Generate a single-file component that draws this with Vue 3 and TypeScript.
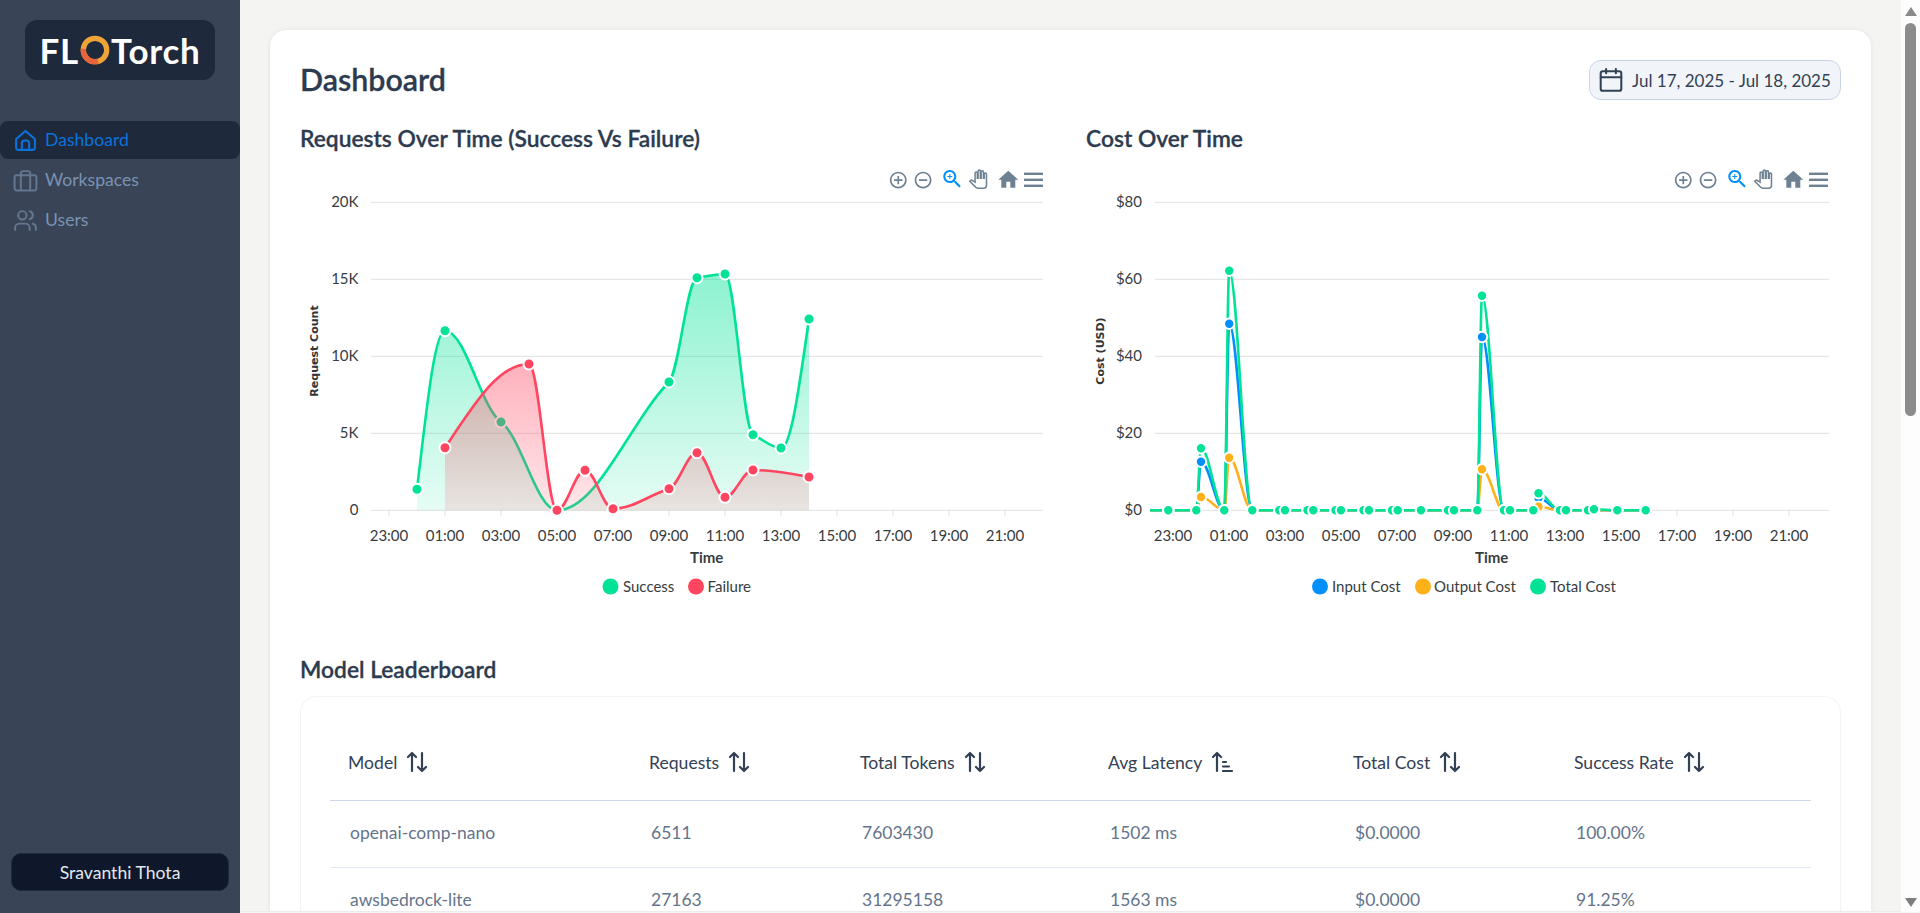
<script setup lang="ts">
interface Pt { x: number; y: number }

function smoothPath(pts: Pt[]): string {
  const n = pts.length
  const t: number[] = new Array(n).fill(0)
  const sl: number[] = []
  for (let i = 0; i < n - 1; i++) sl.push((pts[i + 1].y - pts[i].y) / (pts[i + 1].x - pts[i].x))
  for (let i = 1; i < n - 1; i++) {
    const a = sl[i - 1]
    const b = sl[i]
    const h0 = pts[i].x - pts[i - 1].x
    const h1 = pts[i + 1].x - pts[i].x
    const p = (a * h1 + b * h0) / (h0 + h1)
    t[i] = 0.45 * ((Math.sign(a) + Math.sign(b)) * Math.min(Math.abs(a), Math.abs(b), 0.5 * Math.abs(p)) || 0)
  }
  t[0] = n > 1 ? (3 * sl[0] - t[1]) / 2 : 0
  t[n - 1] = n > 1 ? (3 * sl[n - 2] - t[n - 2]) / 2 : 0
  let d = `M${pts[0].x} ${pts[0].y}`
  for (let i = 0; i < n - 1; i++) {
    const h = (pts[i + 1].x - pts[i].x) * 0.36
    d += `C${pts[i].x + h} ${pts[i].y + h * t[i]} ${pts[i + 1].x - h} ${pts[i + 1].y - h * t[i + 1]} ${pts[i + 1].x} ${pts[i + 1].y}`
  }
  return d
}

const BASE = 510.3
const gridY = [202.3, 279.3, 356.3, 433.3, BASE]
const hourL = (h: number) => 417 + 28 * h
const tickLabels = ['23:00', '01:00', '03:00', '05:00', '07:00', '09:00', '11:00', '13:00', '15:00', '17:00', '19:00', '21:00']
const ticksLeft = tickLabels.map((label, i) => ({ label, x: 389 + 56 * i }))
const ticksRight = tickLabels.map((label, i) => ({ label, x: 1173 + 56 * i }))
const yLeft = ['20K', '15K', '10K', '5K', '0'].map((label, i) => ({ label, y: gridY[i] }))
const yRight = ['$80', '$60', '$40', '$20', '$0'].map((label, i) => ({ label, y: gridY[i] }))

const success: Pt[] = [
  [0, 489.3], [1, 330.7], [3, 422], [5, BASE], [9, 382], [10, 277.7], [11, 274], [12, 434.7], [13, 448], [14, 319],
].map(([h, y]) => ({ x: hourL(h), y }))
const failure: Pt[] = [
  [1, 447.7], [4, 364], [5, BASE], [6, 470.3], [7, 508.7], [9, 488.7], [10, 452.7], [11, 497.3], [12, 470], [14, 477],
].map(([h, y]) => ({ x: hourL(h), y }))

const area = (pts: Pt[]) => `${smoothPath(pts)}L${pts[pts.length - 1].x} ${BASE}L${pts[0].x} ${BASE}Z`
const successLine = smoothPath(success)
const failureLine = smoothPath(failure)
const successArea = area(success)
const failureArea = area(failure)

const costX = [1150, 1168.3, 1196.3, 1201, 1224.3, 1229.2, 1252.3, 1279.3, 1285, 1307.5, 1313.3, 1335.5, 1341, 1363.5, 1369, 1392, 1397.7, 1421, 1448, 1454, 1477.3, 1482, 1504, 1510, 1533.3, 1538.5, 1560, 1566, 1588, 1594, 1617.3, 1645.7]
function costSeries(peaks: Record<number, number>): Pt[] {
  return costX.map((x) => ({ x, y: peaks[x] ?? BASE }))
}
const inputCost = costSeries({ 1201: 461.7, 1229.2: 323.7, 1482: 337, 1538.5: 498 })
const outputCost = costSeries({ 1201: 497, 1229.2: 457.7, 1482: 469.3, 1538.5: 506.7 })
const totalCost = costSeries({ 1201: 448.3, 1229.2: 270.7, 1482: 295.7, 1538.5: 493.3, 1594: 509.3 })
const costLines = [
  { name: 'input', color: '#008FFB', d: smoothPath(inputCost), pts: inputCost.slice(1) },
  { name: 'output', color: '#FEB019', d: smoothPath(outputCost), pts: outputCost.slice(1) },
  { name: 'total', color: '#00E396', d: smoothPath(totalCost), pts: totalCost.slice(1) },
]

const columns = [
  { label: 'Model', sorted: false },
  { label: 'Requests', sorted: false },
  { label: 'Total Tokens', sorted: false },
  { label: 'Avg Latency', sorted: true },
  { label: 'Total Cost', sorted: false },
  { label: 'Success Rate', sorted: false },
]
const rows = [
  ['openai-comp-nano', '6511', '7603430', '1502 ms', '$0.0000', '100.00%'],
  ['awsbedrock-lite', '27163', '31295158', '1563 ms', '$0.0000', '91.25%'],
]
const toolbarOffsets = { left: -785, right: 0 }
</script>

<template>
  <div class="app">
    <aside class="sidebar">
      <div class="logo">
        <span>FL</span>
        <svg class="logo-ring" viewBox="0 0 32 32" width="30" height="30">
          <circle cx="16" cy="16" r="12.5" fill="none" stroke="#F0A438" stroke-width="5.6" />
          <circle cx="16" cy="16" r="12.5" fill="none" stroke="#E8643C" stroke-width="5.6" stroke-dasharray="24 55" transform="rotate(75 16 16)" />
        </svg>
        <span>Torch</span>
      </div>
      <nav class="nav">
        <a class="nav-item active">
          <svg viewBox="0 0 24 24" width="25" height="25" fill="none" stroke="currentColor" stroke-width="2" stroke-linejoin="round">
            <path d="M3 10.5 12 2.8l9 7.7V19a2 2 0 0 1-2 2H5a2 2 0 0 1-2-2z" />
            <path d="M8.5 21v-6.5a2.5 2.5 0 0 1 2.5-2.5h2a2.5 2.5 0 0 1 2.5 2.5V21" />
          </svg>
          <span>Dashboard</span>
        </a>
        <a class="nav-item">
          <svg viewBox="0 0 24 24" width="25" height="25" fill="none" stroke="#64778F" stroke-width="1.9" stroke-linejoin="round">
            <rect x="1.5" y="7" width="21" height="14.5" rx="2" />
            <path d="M16.5 21.5V5a2 2 0 0 0-2-2h-5a2 2 0 0 0-2 2v16.5" />
          </svg>
          <span>Workspaces</span>
        </a>
        <a class="nav-item">
          <svg viewBox="0 0 24 24" width="25" height="25" fill="none" stroke="#64778F" stroke-width="1.9" stroke-linecap="round">
            <path d="M16 21v-2a4 4 0 0 0-4-4H6a4 4 0 0 0-4 4v2" />
            <circle cx="9" cy="7" r="4" />
            <path d="M22 21v-2a4 4 0 0 0-3-3.87" />
            <path d="M16 3.13a4 4 0 0 1 0 7.75" />
          </svg>
          <span>Users</span>
        </a>
      </nav>
      <div class="user">Sravanthi Thota</div>
    </aside>

    <main class="main">
      <section class="card">
        <header class="page-head">
          <h1>Dashboard</h1>
          <button class="date-btn">
            <svg viewBox="0 0 24 24" width="26" height="26" fill="none" stroke="#334155" stroke-width="1.9" stroke-linecap="round">
              <rect x="2.5" y="4" width="19" height="18" rx="2" />
              <path d="M7.5 1.8v4M16.5 1.8v4M2.5 9.5h19" />
            </svg>
            <span>Jul 17, 2025 - Jul 18, 2025</span>
          </button>
        </header>

        <div class="charts">
          <div class="chart chart-left">
            <h2>Requests Over Time (Success Vs Failure)</h2>
            <svg class="plot" viewBox="300 160 770 450" width="770" height="450">
              <defs>
                <linearGradient id="gs" gradientUnits="userSpaceOnUse" x1="0" y1="274" x2="0" y2="510">
                  <stop offset="0" stop-color="#00E396" stop-opacity="0.45" />
                  <stop offset="1" stop-color="#00E396" stop-opacity="0.1" />
                </linearGradient>
                <linearGradient id="gf" gradientUnits="userSpaceOnUse" x1="0" y1="364" x2="0" y2="510">
                  <stop offset="0" stop-color="#FF4560" stop-opacity="0.42" />
                  <stop offset="1" stop-color="#FF4560" stop-opacity="0.13" />
                </linearGradient>
              </defs>
              <g class="grid">
                <line v-for="g in yLeft" :key="g.label" x1="371" x2="1043" :y1="g.y" :y2="g.y" />
                <line v-for="t in ticksLeft" :key="t.label" :x1="t.x" :x2="t.x" :y1="BASE" :y2="BASE + 6" />
              </g>
              <text v-for="g in yLeft" :key="g.label" class="tick" x="358.5" :y="g.y + 5" text-anchor="end">{{ g.label }}</text>
              <text v-for="t in ticksLeft" :key="t.label" class="tick" :x="t.x" y="541" text-anchor="middle">{{ t.label }}</text>
              <text class="axis-y" transform="translate(317.5 351) rotate(-90)" text-anchor="middle">Request Count</text>
              <text class="axis-x" x="706.7" y="562.5" text-anchor="middle">Time</text>

              <path :d="successArea" fill="url(#gs)" />
              <path :d="successLine" class="line" stroke="#00E396" />
              <circle v-for="p in success" :key="p.x" class="dot-l" :cx="p.x" :cy="p.y" fill="#00E396" />
              <path :d="failureArea" fill="url(#gf)" />
              <path :d="failureLine" class="line" stroke="#FF4560" />
              <circle v-for="p in failure" :key="p.x" class="dot-l" :cx="p.x" :cy="p.y" fill="#FF4560" />

              <circle cx="610.5" cy="586.5" r="8" fill="#00E396" />
              <text class="legend" x="623" y="591.5">Success</text>
              <circle cx="696" cy="586.5" r="8" fill="#FF4560" />
              <text class="legend" x="707.6" y="591.5">Failure</text>

              <g :transform="`translate(${toolbarOffsets.left} 0)`">
                <g fill="#6E8192" transform="translate(1673.2 170) scale(.84)">
                  <path d="M13 7h-2v4H7v2h4v4h2v-4h4v-2h-4V7zm-1-5C6.48 2 2 6.48 2 12s4.48 10 10 10 10-4.48 10-10S17.52 2 12 2zm0 18c-4.41 0-8-3.59-8-8s3.59-8 8-8 8 3.59 8 8-3.59 8-8 8z" />
                </g>
                <g fill="#6E8192" transform="translate(1698 170) scale(.84)">
                  <path d="M7 11v2h10v-2H7zm5-9C6.48 2 2 6.48 2 12s4.48 10 10 10 10-4.48 10-10S17.52 2 12 2zm0 18c-4.41 0-8-3.59-8-8s3.59-8 8-8 8 3.59 8 8-3.59 8-8 8z" />
                </g>
                <g fill="#008FFB" transform="translate(1725.3 167)">
                  <path d="M15.5 14h-.79l-.28-.27C15.41 12.59 16 11.11 16 9.5 16 5.91 13.09 3 9.5 3S3 5.91 3 9.5 5.91 16 9.5 16c1.61 0 3.09-.59 4.23-1.57l.27.28v.79l5 4.99L20.49 19l-4.99-5zm-6 0C7.01 14 5 11.99 5 9.5S7.01 5 9.5 5 14 7.01 14 9.5 11.99 14 9.5 14z" />
                  <path d="M12 10h-2v2H9v-2H7V9h2V7h1v2h2v1z" />
                </g>
                <g fill="#fff" stroke="#6E8192" stroke-width="2" transform="translate(1754 170) scale(.76)">
                  <path d="M23 5.5V20c0 2.2-1.8 4-4 4h-7.3c-1.08 0-2.1-.43-2.85-1.19L1 14.83s1.26-1.23 1.3-1.25c.22-.19.49-.29.79-.29.22 0 .42.06.6.16.04.01 4.31 2.46 4.31 2.46V4c0-.83.67-1.5 1.5-1.5S11 3.17 11 4v7h1V1.5c0-.83.67-1.5 1.5-1.5S15 .67 15 1.5V11h1V2.5c0-.83.67-1.5 1.5-1.5s1.5.67 1.5 1.5V11h1V5.5c0-.83.67-1.5 1.5-1.5s1.5.67 1.5 1.5z" />
                </g>
                <g fill="#6E8192" transform="translate(1781.3 167.7)">
                  <path d="M10 20v-6h4v6h5v-8h3L12 3 2 12h3v8z" />
                </g>
                <g fill="#6E8192">
                  <rect x="1809" y="172.6" width="19" height="2.4" />
                  <rect x="1809" y="178.6" width="19" height="2.4" />
                  <rect x="1809" y="184.6" width="19" height="2.4" />
                </g>
              </g>
            </svg>
          </div>

          <div class="chart chart-right">
            <h2>Cost Over Time</h2>
            <svg class="plot" viewBox="1085 160 756 450" width="756" height="450">
              <g class="grid">
                <line v-for="g in yRight" :key="g.label" x1="1155" x2="1829" :y1="g.y" :y2="g.y" />
                <line v-for="t in ticksRight" :key="t.label" :x1="t.x" :x2="t.x" :y1="BASE" :y2="BASE + 6" />
              </g>
              <text v-for="g in yRight" :key="g.label" class="tick" x="1142" :y="g.y + 5" text-anchor="end">{{ g.label }}</text>
              <text v-for="t in ticksRight" :key="t.label" class="tick" :x="t.x" y="541" text-anchor="middle">{{ t.label }}</text>
              <text class="axis-y" transform="translate(1104 351) rotate(-90)" text-anchor="middle">Cost (USD)</text>
              <text class="axis-x" x="1491.7" y="562.5" text-anchor="middle">Time</text>

              <path v-for="s in costLines" :key="s.name" :d="s.d" class="line" :stroke="s.color" />
              <g v-for="s in costLines" :key="s.name">
                <circle v-for="p in s.pts" :key="p.x" class="dot-r" :cx="p.x" :cy="p.y" :fill="s.color" />
              </g>

              <circle cx="1320" cy="586.5" r="8" fill="#008FFB" />
              <text class="legend" x="1332" y="591.5">Input Cost</text>
              <circle cx="1423" cy="586.5" r="8" fill="#FEB019" />
              <text class="legend" x="1434" y="591.5">Output Cost</text>
              <circle cx="1538" cy="586.5" r="8" fill="#00E396" />
              <text class="legend" x="1550" y="591.5">Total Cost</text>

              <g>
                <g fill="#6E8192" transform="translate(1673.2 170) scale(.84)">
                  <path d="M13 7h-2v4H7v2h4v4h2v-4h4v-2h-4V7zm-1-5C6.48 2 2 6.48 2 12s4.48 10 10 10 10-4.48 10-10S17.52 2 12 2zm0 18c-4.41 0-8-3.59-8-8s3.59-8 8-8 8 3.59 8 8-3.59 8-8 8z" />
                </g>
                <g fill="#6E8192" transform="translate(1698 170) scale(.84)">
                  <path d="M7 11v2h10v-2H7zm5-9C6.48 2 2 6.48 2 12s4.48 10 10 10 10-4.48 10-10S17.52 2 12 2zm0 18c-4.41 0-8-3.59-8-8s3.59-8 8-8 8 3.59 8 8-3.59 8-8 8z" />
                </g>
                <g fill="#008FFB" transform="translate(1725.3 167)">
                  <path d="M15.5 14h-.79l-.28-.27C15.41 12.59 16 11.11 16 9.5 16 5.91 13.09 3 9.5 3S3 5.91 3 9.5 5.91 16 9.5 16c1.61 0 3.09-.59 4.23-1.57l.27.28v.79l5 4.99L20.49 19l-4.99-5zm-6 0C7.01 14 5 11.99 5 9.5S7.01 5 9.5 5 14 7.01 14 9.5 11.99 14 9.5 14z" />
                  <path d="M12 10h-2v2H9v-2H7V9h2V7h1v2h2v1z" />
                </g>
                <g fill="#fff" stroke="#6E8192" stroke-width="2" transform="translate(1754 170) scale(.76)">
                  <path d="M23 5.5V20c0 2.2-1.8 4-4 4h-7.3c-1.08 0-2.1-.43-2.85-1.19L1 14.83s1.26-1.23 1.3-1.25c.22-.19.49-.29.79-.29.22 0 .42.06.6.16.04.01 4.31 2.46 4.31 2.46V4c0-.83.67-1.5 1.5-1.5S11 3.17 11 4v7h1V1.5c0-.83.67-1.5 1.5-1.5S15 .67 15 1.5V11h1V2.5c0-.83.67-1.5 1.5-1.5s1.5.67 1.5 1.5V11h1V5.5c0-.83.67-1.5 1.5-1.5s1.5.67 1.5 1.5z" />
                </g>
                <g fill="#6E8192" transform="translate(1781.3 167.7)">
                  <path d="M10 20v-6h4v6h5v-8h3L12 3 2 12h3v8z" />
                </g>
                <g fill="#6E8192">
                  <rect x="1809" y="172.6" width="19" height="2.4" />
                  <rect x="1809" y="178.6" width="19" height="2.4" />
                  <rect x="1809" y="184.6" width="19" height="2.4" />
                </g>
              </g>
            </svg>
          </div>
        </div>

        <h2 class="board-title">Model Leaderboard</h2>
        <div class="board">
          <table>
            <thead>
              <tr>
                <th v-for="c in columns" :key="c.label">
                  <span class="th-inner">
                    {{ c.label }}
                    <svg v-if="!c.sorted" viewBox="0 0 24 24" width="24" height="24" fill="none" stroke="#334155" stroke-width="2.2" stroke-linecap="round" stroke-linejoin="round">
                      <path d="M7 21V3M3 7 7 3l4 4" />
                      <path d="M17 3v18M13 17l4 4 4-4" />
                    </svg>
                    <svg v-else viewBox="0 0 24 24" width="24" height="24" fill="none" stroke="#334155" stroke-width="2.2" stroke-linecap="round" stroke-linejoin="round">
                      <path d="M7 21V3M3 7 7 3l4 4" />
                      <path d="M13 12h3M13 16.5h6M13 21h9" />
                    </svg>
                  </span>
                </th>
              </tr>
            </thead>
            <tbody>
              <tr v-for="r in rows" :key="r[0]">
                <td v-for="(v, i) in r" :key="i">{{ v }}</td>
              </tr>
            </tbody>
          </table>
        </div>
      </section>
    </main>

    <div class="scrollbar">
      <span class="arrow-up"></span>
      <span class="thumb"></span>
      <span class="spacer"></span>
      <span class="arrow-down"></span>
    </div>
  </div>
</template>

<style>
html, body { margin: 0; overflow: hidden; }
</style>

<style scoped>
.app {
  display: flex;
  height: 913px;
  overflow: hidden;
  font-family: Lato, "Liberation Sans", sans-serif;
  background: #f4f4f3;
}
.sidebar {
  width: 240px;
  flex: none;
  display: flex;
  flex-direction: column;
  background: #394457;
  box-sizing: border-box;
  padding-top: 20px;
}
.logo {
  align-self: center;
  width: 190px;
  height: 60px;
  box-sizing: border-box;
  display: flex;
  align-items: center;
  justify-content: center;
  background: #1e293b;
  border-radius: 12px;
  color: #fff;
  font-family: Lato, sans-serif;
  font-weight: 700;
  font-size: 35px;
  letter-spacing: 0.7px;
  line-height: 1;
}
.logo-ring { margin: 0 1px; }
.nav {
  margin-top: 41px;
  display: flex;
  flex-direction: column;
  gap: 2px;
}
.nav-item {
  height: 38px;
  display: flex;
  align-items: center;
  gap: 7px;
  padding-left: 13px;
  border-radius: 8px;
  font-size: 17.6px;
  color: #7a92b2;
}
.nav-item span { margin-top: -2px; }
.nav-item.active {
  background: #1e293b;
  color: #0b72dc;
}
.user {
  margin: auto 11px 22px;
  height: 38px;
  display: flex;
  align-items: center;
  justify-content: center;
  background: #0f172a;
  border: 1px solid #1e293b;
  box-sizing: border-box;
  border-radius: 10px;
  color: #e2e8f0;
  font-size: 17.6px;
}
.main {
  flex: 1;
  min-width: 0;
  padding: 30px 30px 0;
  height: 912px;
  box-sizing: border-box;
  border-bottom: 1px solid #ececec;
  overflow: hidden;
}
.card {
  background: #fff;
  border-radius: 16px 16px 0 0;
  box-shadow: 0 0 4px rgba(0, 0, 0, 0.08);
  padding: 30px 30px 0;
  height: 1200px;
  box-sizing: border-box;
}
.page-head {
  display: flex;
  align-items: center;
  justify-content: space-between;
  height: 40px;
}
h1 {
  margin: 0 0 2px;
  font-size: 30.4px;
  font-weight: 600;
  color: #2c3b4f;
  -webkit-text-stroke: 0.3px currentColor;
}
h2 {
  margin: 0;
  font-size: 22.8px;
  font-weight: 600;
  color: #2c3b4f;
  line-height: 30px;
  -webkit-text-stroke: 0.3px currentColor;
}
.date-btn {
  width: 252px;
  height: 40px;
  box-sizing: border-box;
  display: flex;
  align-items: center;
  gap: 8px;
  padding: 0 0 0 8px;
  background: #f1f5f9;
  border: 1px solid #c8d5e4;
  border-radius: 12px;
  font-family: inherit;
  font-size: 17px;
  color: #334155;
  white-space: nowrap;
}
.date-btn svg { flex: none; }
.charts {
  display: flex;
  margin-top: 23px;
}
.chart-left { width: 785px; flex: none; }
.chart-right { width: 756px; flex: none; }
.chart-right h2 { padding-left: 1px; }
.plot { display: block; margin-top: 7px; }
.grid line { stroke: #e0e0e0; stroke-width: 1; }
.tick { font-size: 15px; fill: #373d3f; }
.axis-y { font-family: "DejaVu Sans", sans-serif; font-size: 11px; font-weight: 700; fill: #2f3538; }
.axis-x { font-size: 15px; font-weight: 700; fill: #373d3f; }
.legend { font-size: 15px; fill: #373d3f; }
.line { fill: none; stroke-width: 2.6; }
.dot-l { r: 5.5px; stroke: #fff; stroke-width: 2; }
.dot-r { r: 5.2px; stroke: #fff; stroke-width: 2; }
.board-title { margin-top: 44px; }
.board {
  margin-top: 12px;
  border: 1px solid #f3f4f6;
  border-radius: 16px;
  padding: 29px;
}
table {
  width: 1481px;
  border-collapse: collapse;
  table-layout: fixed;
}
th:nth-child(1) { width: 301px; }
th:nth-child(2) { width: 211px; }
th:nth-child(3) { width: 248px; }
th:nth-child(4) { width: 245px; }
th:nth-child(5) { width: 221px; }
th:nth-child(6) { width: 255px; }
th, td { box-sizing: border-box; }
th {
  height: 74px;
  padding: 0 0 1px 18px;
  text-align: left;
  font-weight: 400;
  font-size: 17.6px;
  color: #334155;
  border-bottom: 1px solid #cbd9e8;
}
.th-inner { display: flex; align-items: center; gap: 8px; }
td {
  height: 67px;
  padding: 0 0 2px 20px;
  font-size: 17.5px;
  color: #64748b;
  border-bottom: 1px solid #e2e8f0;
}
.scrollbar {
  width: 19px;
  flex: none;
  height: 912px;
  display: flex;
  flex-direction: column;
  align-items: center;
  background: #fdfdfd;
  padding-top: 7px;
  padding-bottom: 5px;
  box-sizing: border-box;
}
.arrow-up {
  width: 0; height: 0;
  border-left: 6.5px solid transparent;
  border-right: 6.5px solid transparent;
  border-bottom: 9px solid #8a8a8a;
}
.thumb {
  margin-top: 7px;
  width: 11px;
  height: 393px;
  border-radius: 6px;
  background: #8c8c8c;
}
.spacer { flex: 1; }
.arrow-down {
  width: 0; height: 0;
  border-left: 6.5px solid transparent;
  border-right: 6.5px solid transparent;
  border-top: 9px solid #7e7e7e;
}
</style>
